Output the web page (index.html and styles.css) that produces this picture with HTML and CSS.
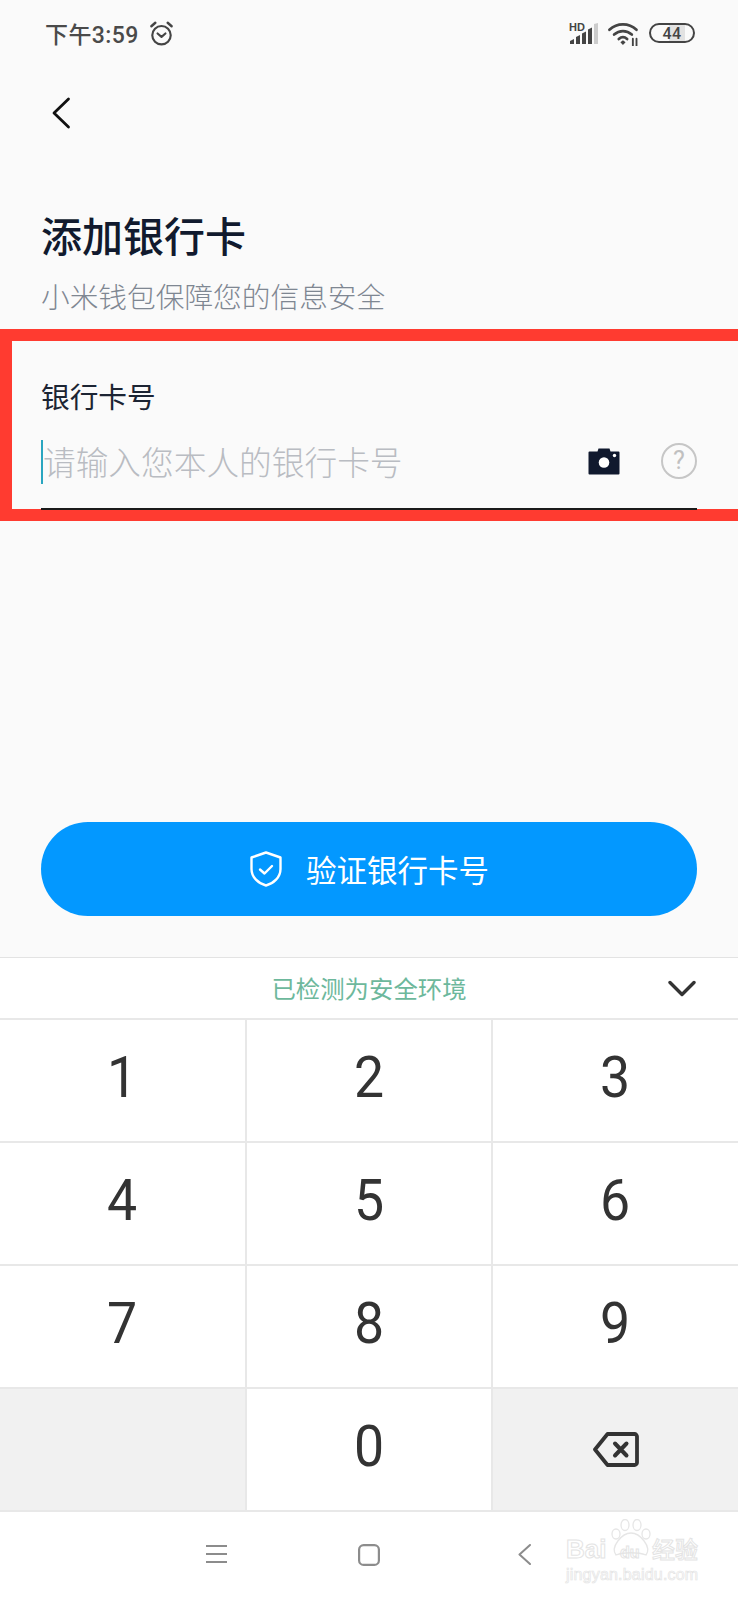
FILE: index.html
```html
<!DOCTYPE html>
<html lang="zh-CN">
<head>
<meta charset="utf-8">
<title>添加银行卡</title>
<link rel="stylesheet" href="styles.css">
</head>
<body>
<div class="page">
  <header class="status">
    <div class="status-left">
      <span class="clock">下午3:59</span>
      <svg class="alarm" viewBox="0 0 24 24" fill="none" stroke="#444" stroke-width="1.900" stroke-linecap="round" stroke-linejoin="round"><circle cx="12" cy="13.500" r="8.200"/><path d="M8.500 12l3.500 3 3.500-3"/><path d="M3 5.500L6.500 2.500M21 5.500L17.500 2.500" stroke-width="2.200"/></svg>
    </div>
    <div class="status-right">
      <svg class="signal" viewBox="0 0 30 24"><text x="0" y="9.500" class="hd">HD</text><path d="M1 23v-3l4-2v5zM7 23v-7l4-2v9zM13 23V12.500l4-2V23zM19 23V8.500l4-2V23z" fill="#444"/><path d="M25 23V3l4-1v21z" fill="#ccc"/></svg>
      <svg class="wifi" viewBox="0 0 32 24" fill="none" stroke="#444" stroke-width="2.600" stroke-linecap="round"><path d="M2 8.500C9.500 1.500 20.500 1.500 28 8.500M6.500 13C11.500 8.500 18.500 8.500 23.500 13M11 17.300C13.500 15 16.500 15 19 17.300"/><path d="M12.500 20.500L15 18.500L17.500 20.500L15 23z" fill="#444" stroke="none"/><path d="M24.500 17v7M28 17v7" stroke-width="1.800"/></svg>
      <div class="battery"><span class="battery-fill"></span><span class="battery-num">44</span></div>
    </div>
  </header>

  <nav class="topbar">
    <svg class="back" viewBox="0 0 20 32" fill="none" stroke="#111" stroke-width="2.800" stroke-linecap="round" stroke-linejoin="round"><path d="M17.500 2L3 16l14.500 14"/></svg>
  </nav>

  <h1 class="title">添加银行卡</h1>
  <p class="subtitle">小米钱包保障您的信息安全</p>

  <section class="highlight">
    <div class="label">银行卡号</div>
    <div class="field">
      <span class="caret"></span>
      <span class="placeholder">请输入您本人的银行卡号</span>
      <svg class="camera" viewBox="0 0 32 28"><path d="M1.500 4.500H9.500L10.500 1.500H21.500L22.500 4.500H30.500A1 1 0 0 1 31.500 5.500V26.500A1 1 0 0 1 30.500 27.500H1.500A1 1 0 0 1 .5 26.500V5.500A1 1 0 0 1 1.500 4.500Z" fill="#10192e"/><circle cx="16" cy="15.500" r="5.300" fill="#fff"/><circle cx="26.500" cy="8.500" r="1.700" fill="#fff"/></svg>
      <div class="help">?</div>
    </div>
  </section>

  <div class="spacer"></div>

  <button class="verify" type="button">
    <svg class="shield" viewBox="0 0 32 36" fill="none" stroke="#fff" stroke-width="2.400" stroke-linecap="round" stroke-linejoin="round"><path d="M16 1.500L30.500 6.500V18C30.500 26.500 23.500 32.500 16 34.500C8.500 32.500 1.500 26.500 1.500 18V6.500Z"/><path d="M10 18.500L14.500 22.500L22 15"/></svg>
    <span>验证银行卡号</span>
  </button>

  <section class="keyboard">
    <div class="kb-head">
      <span class="kb-hint">已检测为安全环境</span>
      <svg class="kb-close" viewBox="0 0 28 17" fill="none" stroke="#333" stroke-width="3.400" stroke-linecap="round" stroke-linejoin="round"><path d="M2 2.500L14 14.500L26 2.500"/></svg>
    </div>
    <div class="keys">
      <div class="key"><span>1</span></div><div class="key"><span>2</span></div><div class="key"><span>3</span></div>
      <div class="key"><span>4</span></div><div class="key"><span>5</span></div><div class="key"><span>6</span></div>
      <div class="key"><span>7</span></div><div class="key"><span>8</span></div><div class="key"><span>9</span></div>
      <div class="key key-grey"></div><div class="key"><span>0</span></div>
      <div class="key key-grey">
        <svg class="del" viewBox="0 0 46 35" fill="none" stroke="#333" stroke-width="3.800" stroke-linecap="round" stroke-linejoin="round"><path d="M14.500 2H41.500A2.500 2.500 0 0 1 44 4.500V30.500A2.500 2.500 0 0 1 41.500 33H14.500L2 17.500Z"/><path d="M22 11.500L33.500 23.500M33.500 11.500L22 23.500" stroke-width="4"/></svg>
      </div>
    </div>
  </section>

  <footer class="navbar">
    <svg class="nav-menu" viewBox="0 0 21 18" stroke="#8c8c8c" stroke-width="2" fill="none"><path d="M0 1h21M0 9h21M0 17h21"/></svg>
    <svg class="nav-home" viewBox="0 0 22 22" fill="none" stroke="#8c8c8c" stroke-width="2.200"><rect x="1.100" y="1.100" width="19.800" height="19.800" rx="4.500"/></svg>
    <svg class="nav-back" viewBox="0 0 13 21" fill="none" stroke="#8c8c8c" stroke-width="2" stroke-linecap="round" stroke-linejoin="round"><path d="M12 1L1.500 10.500L12 20"/></svg>
    <div class="watermark">
      <svg class="paw" viewBox="0 0 42 38" fill="none" stroke="#e6e6e6" stroke-width="1.300"><ellipse cx="6" cy="15" rx="4" ry="5"/><ellipse cx="15" cy="6" rx="4" ry="5.500"/><ellipse cx="27" cy="6" rx="4" ry="5.500"/><ellipse cx="36" cy="15" rx="4" ry="5"/><path d="M6 36C0 28 12 14 21 14C30 14 42 28 36 36C28 33 14 33 6 36Z"/></svg>
      <div class="wm-brand"><span class="wm-bai">Bai</span><span class="wm-du">du</span><span class="wm-cn">经验</span></div>
      <div class="wm-url">jingyan.baidu.com</div>
    </div>
  </footer>
</div>
</body>
</html>
```

FILE: styles.css
```css
* { box-sizing: border-box; }
html, body { margin: 0; padding: 0; }
body { background: #fafafa; font-family: "Noto Sans CJK SC", Roboto, sans-serif; }

.page {
  width: 738px;
  height: 1600px;
  display: flex;
  flex-direction: column;
  overflow: hidden;
  background: #fafafa;
}

.status {
  height: 68px;
  flex: none;
  display: flex;
  align-items: center;
  justify-content: space-between;
  padding: 0 43px 2px 45px;
}
.status-left, .status-right { display: flex; align-items: center; }
.clock {
  font-family: Roboto, "Noto Sans CJK SC", sans-serif;
  font-size: 23px;
  font-weight: 500;
  color: #4a4a4a;
  letter-spacing: .4px;
}
.alarm { width: 27px; height: 27px; margin-left: 9px; }
.signal { width: 30px; height: 24px; }
.hd { font: 700 11px "Liberation Sans", sans-serif; fill: #444; }
.wifi { width: 34px; height: 25px; margin-left: 8px; }
.battery {
  position: relative;
  width: 46px;
  height: 20px;
  margin-left: 8px;
  border: 2px solid #444;
  border-radius: 10px;
  overflow: hidden;
  display: flex;
  align-items: center;
  justify-content: center;
}
.battery-fill { position: absolute; left: 44%; top: 0; bottom: 0; width: 36%; background: #e2e2e2; }
.battery-num {
  position: relative;
  font: 500 16px Roboto, sans-serif;
  color: #444;
  letter-spacing: .5px;
}

.topbar { height: 90px; flex: none; display: flex; align-items: center; padding-left: 51px; }
.back { width: 20px; height: 32px; }

.title {
  margin: 48px 0 0 41px;
  font-size: 41px;
  line-height: 56px;
  font-weight: 500;
  color: #111a2e;
}
.subtitle {
  margin: 14px 0 0 41px;
  font-size: 28.700px;
  line-height: 40px;
  font-weight: 300;
  color: #7f8792;
}

.highlight {
  flex: none;
  width: 780px;
  height: 192px;
  margin-top: 13px;
  border: 12px solid #ff3b30;
  padding: 32px 0 0 29px;
}
.label { font-size: 28.700px; line-height: 46px; color: #1c2433; font-weight: 400; }
.field {
  width: 656px;
  height: 83px;
  margin-top: 8px;
  padding: 0 0 14px 0;
  border-bottom: 2px solid #1a1a1a;
  display: flex;
  align-items: center;
  position: relative;
}
.caret { position: absolute; left: 0; top: 13px; width: 2px; height: 44px; background: #2aa6c0; }
.placeholder { margin-left: 2px; font-size: 32.700px; font-weight: 300; color: #b9bcc2; flex: 1; }
.camera { width: 32px; height: 28px; margin-right: 41px; }
.help {
  width: 36px;
  height: 36px;
  border: 2px solid #c6c6c6;
  border-radius: 50%;
  display: flex;
  align-items: center;
  justify-content: center;
  font: 400 25px Roboto, sans-serif;
  color: #c0c0c0;
}

.spacer { flex: 1; }

.verify {
  flex: none;
  height: 94px;
  margin: 0 41px 41px;
  border: 0;
  border-radius: 47px;
  background: #0398ff;
  color: #fff;
  display: flex;
  align-items: center;
  justify-content: center;
  gap: 24px;
  font-family: inherit;
  font-size: 30.500px;
  font-weight: 400;
  padding-right: 5px;
}
.shield { width: 32px; height: 36px; }

.keyboard { flex: none; background: #fff; border-top: 1px solid #e3e3e3; }
.kb-head { height: 60px; position: relative; display: flex; align-items: center; justify-content: center; }
.kb-hint { font-size: 24.400px; font-weight: 400; color: #6db89c; margin: 0 0 2px 0; }
.kb-close { position: absolute; right: 42px; top: 22px; width: 28px; height: 17px; }
.keys {
  display: grid;
  grid-template-columns: 245px 244px 1fr;
  grid-auto-rows: 121px;
  gap: 2px;
  padding: 2px 0;
  background: #e8e8e8;
}
.key {
  background: #fff;
  display: flex;
  align-items: center;
  justify-content: center;
  padding-bottom: 6px;
  font-family: Roboto, sans-serif;
  font-size: 57px;
  font-weight: 400;
  color: #333;
}
.key span { display: block; transform: scaleX(.94); }
.key-grey { background: #f1f1f1; padding-bottom: 0; }
.del { width: 46px; height: 35px; }

.navbar { flex: none; height: 88px; background: #fff; position: relative; }
.nav-menu { position: absolute; left: 206px; top: 33px; width: 21px; height: 18px; }
.nav-home { position: absolute; left: 358px; top: 32px; width: 22px; height: 22px; }
.nav-back { position: absolute; left: 518px; top: 32px; width: 13px; height: 21px; }
.watermark { position: absolute; left: 566px; top: 7px; width: 134px; height: 75px; color: transparent; }
.paw { position: absolute; left: 44px; top: 0; width: 42px; height: 38px; }
.wm-brand {
  position: absolute;
  left: 0;
  top: 14px;
  width: 134px;
  display: flex;
  align-items: baseline;
  white-space: nowrap;
  line-height: 30px;
  -webkit-text-stroke: 1px #e4e4e4;
}
.wm-bai { width: 54px; font: 700 26px/30px "Liberation Sans", sans-serif; }
.wm-du { width: 32px; font: 700 16px/30px "Liberation Sans", sans-serif; }
.wm-cn { font: 500 23px/30px "Noto Sans CJK SC", sans-serif; }
.wm-url {
  position: absolute;
  left: 0;
  top: 46px;
  white-space: nowrap;
  font: 400 16px/20px "Liberation Sans", sans-serif;
  -webkit-text-stroke: .7px #e4e4e4;
  letter-spacing: .2px;
}
```
